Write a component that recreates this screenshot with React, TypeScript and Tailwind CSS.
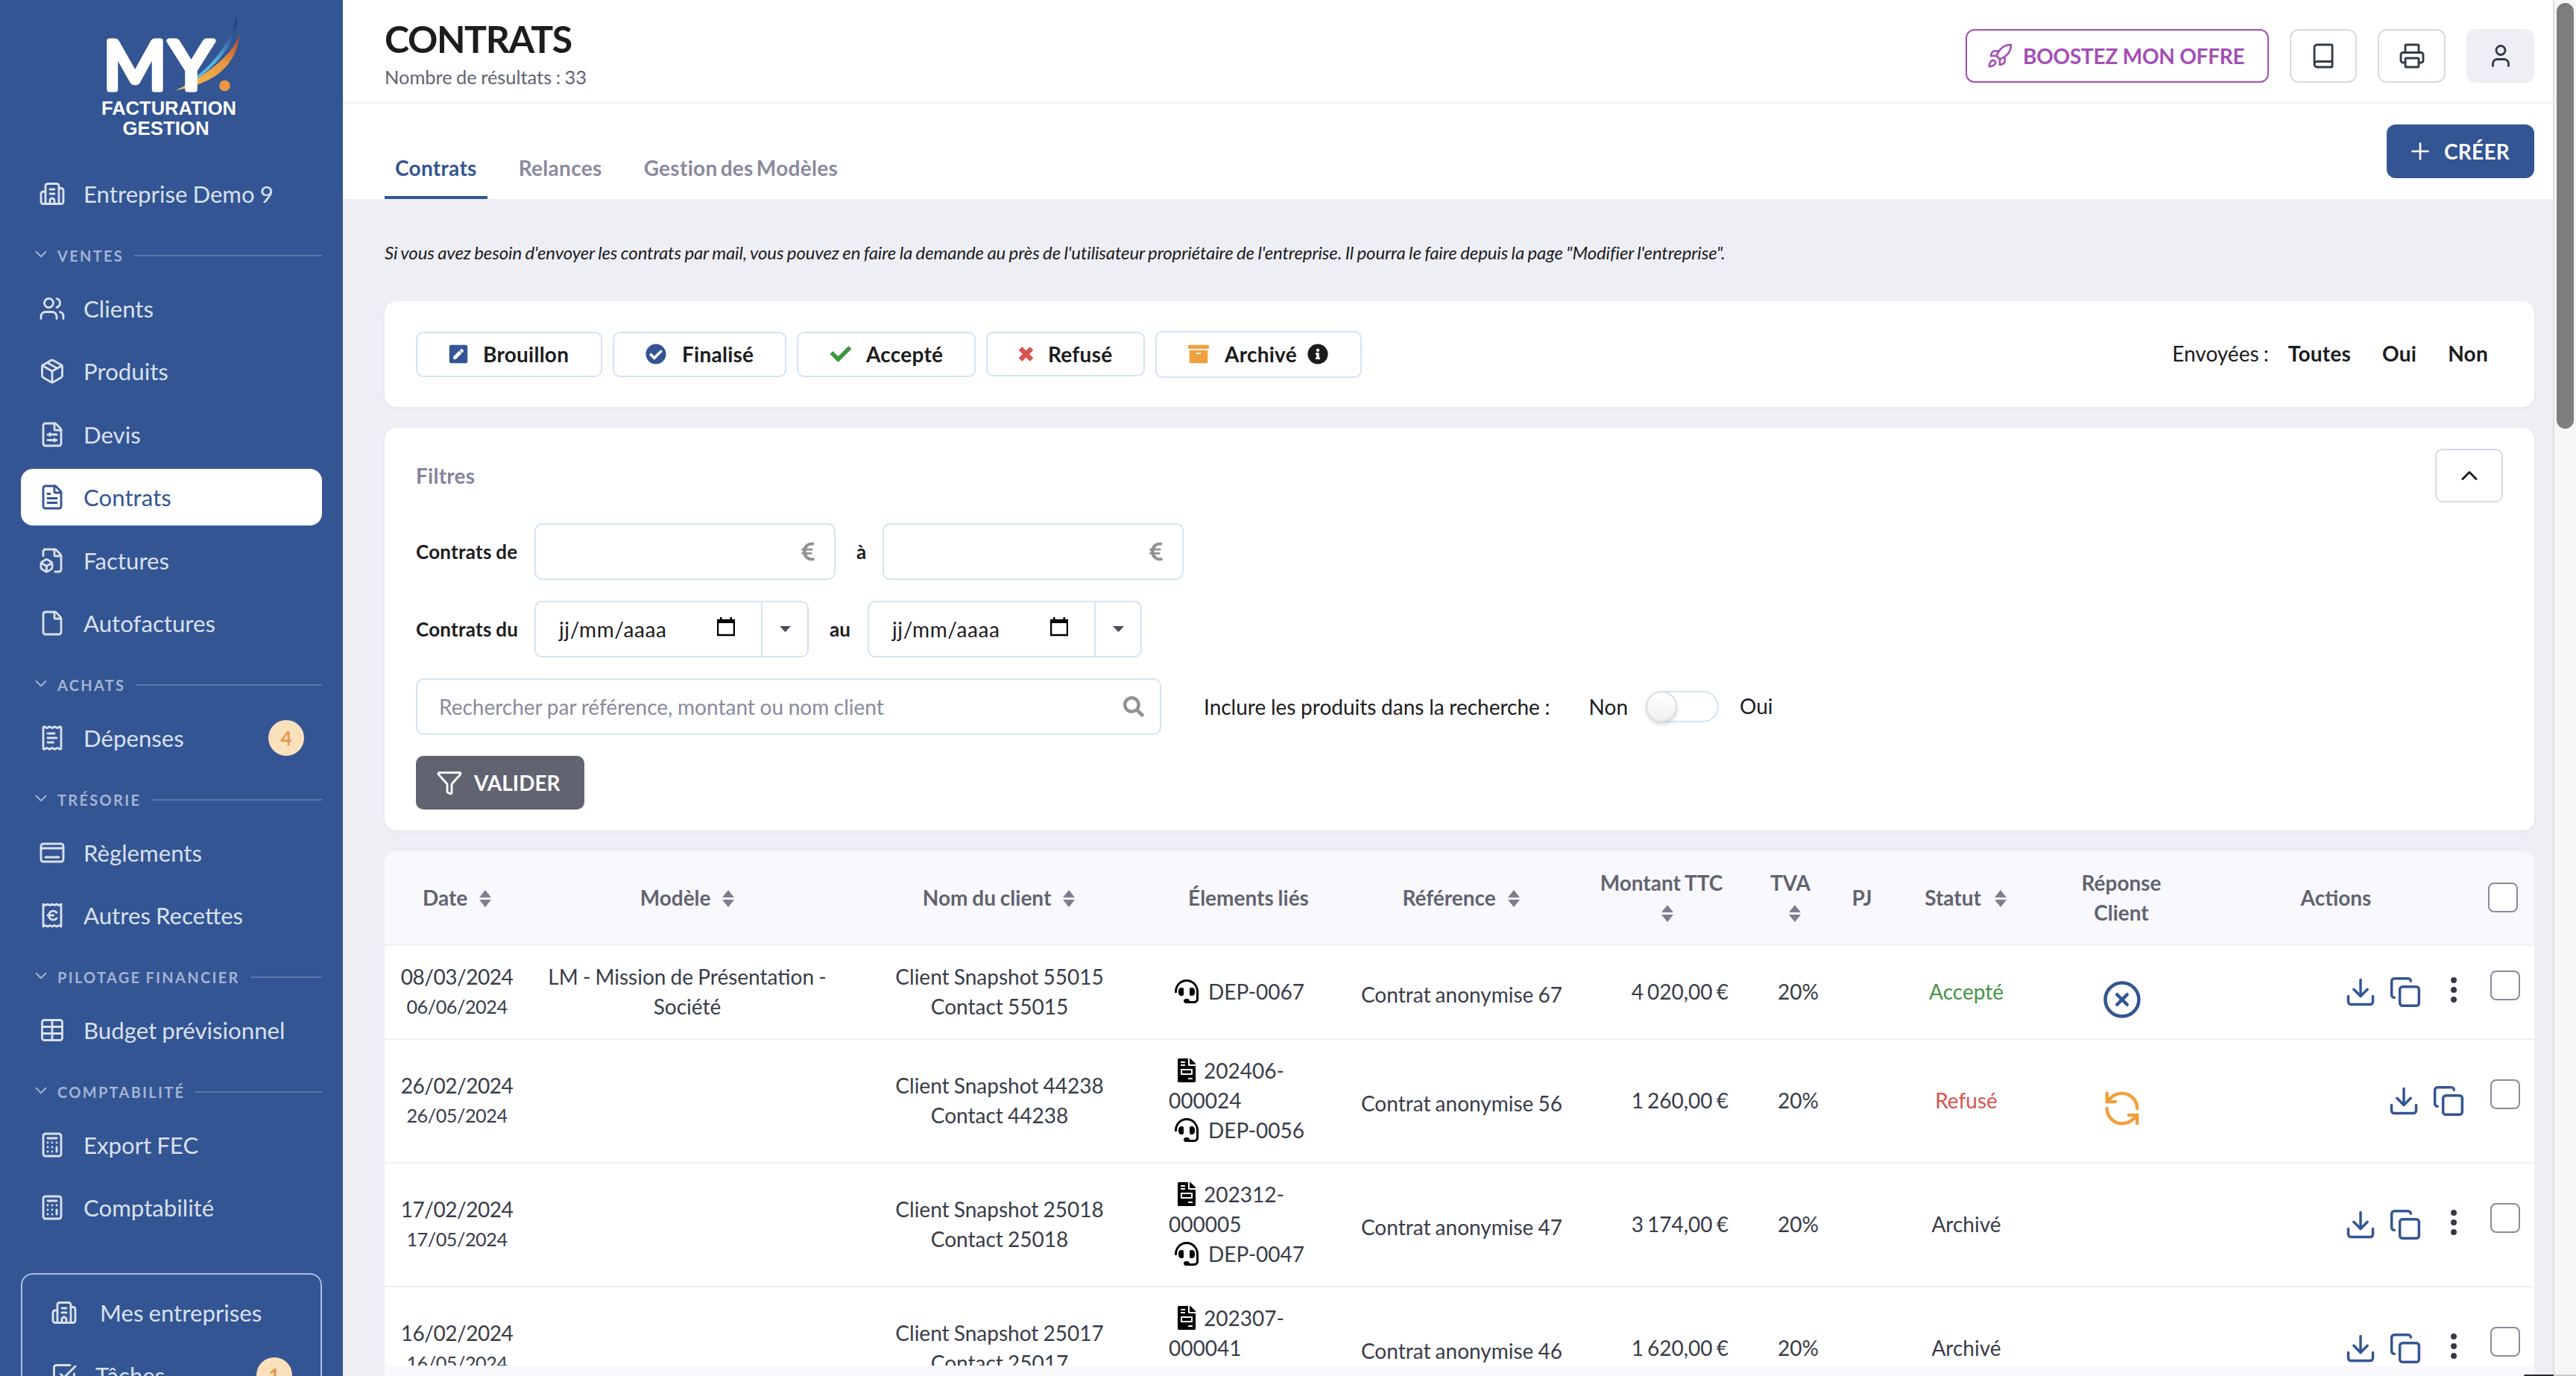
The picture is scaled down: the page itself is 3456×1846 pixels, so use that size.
import clsx from "clsx";
import {
  Book,
  Building2,
  Calculator,
  ChevronDown,
  ChevronUp,
  CircleX,
  Copy,
  Dock,
  Download,
  File,
  FileBox,
  FileSliders,
  FileText,
  Funnel,
  Package,
  Plus,
  Printer,
  ReceiptEuro,
  ReceiptText,
  RefreshCcw,
  Rocket,
  SquareCheckBig,
  Table,
  User,
  Users
} from "lucide-react";
import { ComponentType, ReactNode } from "react";
import {
  FaArchive,
  FaCheck,
  FaCheckCircle,
  FaEuroSign,
  FaFileInvoice,
  FaHeadset,
  FaInfoCircle,
  FaPenSquare,
  FaSearch
} from "react-icons/fa";

type IconProps = { className?: string; strokeWidth?: number | string };
type IconType = ComponentType<IconProps>;

type NavItem = {
  label: string;
  icon: IconType;
  badge?: string;
  active?: boolean;
};

type NavSection = {
  title: string;
  items: NavItem[];
};

type Contract = {
  date: string;
  dueDate: string;
  model?: string;
  client: string;
  contact: string;
  invoice?: string;
  quote: string;
  reference: string;
  amount: string;
  status: string;
  statusClass?: string;
  answer?: "closed" | "retry";
  hasMenu: boolean;
};

const sections: NavSection[] = [
  {
    title: "VENTES",
    items: [
      { label: "Clients", icon: Users },
      { label: "Produits", icon: Package },
      { label: "Devis", icon: FileSliders },
      { label: "Contrats", icon: FileText, active: true },
      { label: "Factures", icon: FileBox },
      { label: "Autofactures", icon: File }
    ]
  },
  { title: "ACHATS", items: [{ label: "Dépenses", icon: ReceiptText, badge: "4" }] },
  {
    title: "TRÉSORIE",
    items: [
      { label: "Règlements", icon: Dock },
      { label: "Autres Recettes", icon: ReceiptEuro }
    ]
  },
  { title: "PILOTAGE FINANCIER", items: [{ label: "Budget prévisionnel", icon: Table }] },
  {
    title: "COMPTABILITÉ",
    items: [
      { label: "Export FEC", icon: Calculator },
      { label: "Comptabilité", icon: Calculator }
    ]
  }
];

const contracts: Contract[] = [
  {
    date: "08/03/2024",
    dueDate: "06/06/2024",
    model: "LM - Mission de Présentation - Société",
    client: "Client Snapshot 55015",
    contact: "Contact 55015",
    quote: "DEP-0067",
    reference: "Contrat anonymise 67",
    amount: "4 020,00 €",
    status: "Accepté",
    statusClass: "text-[#419641]",
    answer: "closed",
    hasMenu: true
  },
  {
    date: "26/02/2024",
    dueDate: "26/05/2024",
    client: "Client Snapshot 44238",
    contact: "Contact 44238",
    invoice: "202406-000024",
    quote: "DEP-0056",
    reference: "Contrat anonymise 56",
    amount: "1 260,00 €",
    status: "Refusé",
    statusClass: "text-[#d9534f]",
    answer: "retry",
    hasMenu: false
  },
  {
    date: "17/02/2024",
    dueDate: "17/05/2024",
    client: "Client Snapshot 25018",
    contact: "Contact 25018",
    invoice: "202312-000005",
    quote: "DEP-0047",
    reference: "Contrat anonymise 47",
    amount: "3 174,00 €",
    status: "Archivé",
    hasMenu: true
  },
  {
    date: "16/02/2024",
    dueDate: "16/05/2024",
    client: "Client Snapshot 25017",
    contact: "Contact 25017",
    invoice: "202307-000041",
    quote: "DEP-0046",
    reference: "Contrat anonymise 46",
    amount: "1 620,00 €",
    status: "Archivé",
    hasMenu: true
  }
];

const columnWidths = [
  "w-[194px]",
  "w-[424px]",
  "w-[412px]",
  "w-[258px]",
  "w-[314px]",
  "w-[224px]",
  "w-[120px]",
  "w-[72px]",
  "w-[208px]",
  "w-[208px]",
  "w-[368px]",
  "w-[82px]"
];

export default function App() {
  return (
    <div className="relative flex h-[1846px] w-[3456px] overflow-hidden bg-[#eeeff5] font-['Lato',sans-serif] text-[28px] leading-[40px] text-[#1c1c1e] [word-spacing:-1px]">
      <Sidebar />
      <div className="flex h-full w-[2965px] flex-col">
        <Header />
        <main className="flex min-h-0 flex-1 flex-col pl-14 pr-[25px]">
          <p className="mt-[52px] h-10 whitespace-nowrap text-[24px] italic tracking-[-0.13px]">
            Si vous avez besoin d'envoyer les contrats par mail, vous pouvez en faire la demande au près de l'utilisateur
            propriétaire de l'entreprise. Il pourra le faire depuis la page "Modifier l'entreprise".
          </p>
          <StatusBar />
          <Filters />
          <ContractTable />
          <div className="h-[14px] shrink-0 bg-[#f9f9fd]" />
        </main>
      </div>
      <div className="ml-auto h-full w-[31px] border-l-2 border-[#dedee2] bg-[#f6f6f8] pl-[3px] pt-1">
        <div className="h-[571px] w-[23px] rounded-full bg-[#7d7d7d]" />
      </div>
      {/* Top edge of the docked help widget */}
      <div className="absolute bottom-0 right-0 flex h-0.5 w-[70px]">
        <div className="w-10 rounded-tl-full bg-[#2b2b2f]" />
        <div className="flex-1 bg-[#c9c9cc]" />
      </div>
    </div>
  );
}

function Sidebar() {
  return (
    <aside className="flex h-full w-[460px] shrink-0 flex-col overflow-hidden bg-[#335593] px-7 text-[#d9e0ee]">
      <Logo />
      <NavRow icon={Building2} label="Entreprise Demo 9" />
      {sections.map((section) => (
        <div className="shrink-0" key={section.title}>
          <div className="flex h-[69.2px] items-center pl-[14px] pt-[12px] text-[20px] font-bold tracking-[2.3px] text-[#a3b3d2]">
            <ChevronDown className="mb-1 size-[26px] shrink-0" strokeWidth={1.75} />
            <span className="ml-[9px] whitespace-nowrap">{section.title}</span>
            <span className="ml-[14px] h-0.5 flex-1 bg-[#5a76a8]" />
          </div>
          {section.items.map((item) => (
            <NavRow key={item.label} {...item} />
          ))}
        </div>
      ))}
      <div className="mt-[46px] h-[300px] shrink-0 rounded-[16px] border-2 border-[#a9bfe6] pl-[10px] pr-[10px] pt-[8px]">
        <NavRow icon={Building2} label="Mes entreprises" labelClass="ml-[30px]" nested />
        <NavRow badge="1" icon={SquareCheckBig} label="Tâches" nested />
      </div>
    </aside>
  );
}

function NavRow({
  label,
  icon: Icon,
  badge,
  active,
  nested,
  labelClass = "ml-6"
}: NavItem & { nested?: boolean; labelClass?: string }) {
  return (
    <div className="flex h-[84.5px] shrink-0 items-center">
      <div
        className={clsx(
          "flex h-[76px] w-full items-center rounded-[16px]",
          nested ? "pl-[28px] pr-[28px]" : "pl-6 pr-6",
          active && "bg-white text-[#335593]"
        )}
      >
        <Icon className="size-9 shrink-0" strokeWidth={1.9} />
        <span className={clsx("text-[31.2px]", labelClass)}>{label}</span>
        {badge ? (
          <span className="ml-auto flex size-12 items-center justify-center rounded-full bg-[#fae0bb] text-[26px] font-bold text-[#e1984b]">
            {badge}
          </span>
        ) : null}
      </div>
    </div>
  );
}

function Logo() {
  return (
    <div className="h-[218px] shrink-0">
      <svg className="ml-[92px] h-[200px] w-[220px]" viewBox="120 0 220 200">
        <defs>
          <linearGradient id="swoosh-blue" x1="0" x2="1" y1="1" y2="0">
            <stop offset="0" stopColor="#5cc4ee" />
            <stop offset="0.5" stopColor="#56b8e6" />
            <stop offset="1" stopColor="#1d2a6b" />
          </linearGradient>
          <linearGradient id="swoosh-orange" x1="0" x2="1" y1="1" y2="0">
            <stop offset="0" stopColor="#f6c445" />
            <stop offset="0.6" stopColor="#e89a45" />
            <stop offset="1" stopColor="#b4411f" />
          </linearGradient>
        </defs>
        <path d="M318 22C319 48 305 76 262 108C252 115 243 119 235 121C250 116 257 108 264 102C292 80 309 54 318 22Z" fill="url(#swoosh-blue)" />
        <path d="M321.5 44C317 62 303 80 264 106C254 112 245 118 235 121C272 115 318 98 321.5 44Z" fill="url(#swoosh-orange)" />
        <circle cx="301.5" cy="115" fill="#ea9840" r="7.3" />
        <g
          fill="white"
          fontFamily="Lato, sans-serif"
          fontSize="91"
          fontWeight="400"
          stroke="white"
          strokeLinejoin="round"
          strokeWidth="7"
        >
          <text lengthAdjust="spacingAndGlyphs" textLength="85" x="138.5" y="120">
            M
          </text>
          <text lengthAdjust="spacingAndGlyphs" textLength="59" x="227" y="120">
            Y
          </text>
        </g>
        <g fill="white" fontFamily="'Liberation Sans', Arial, sans-serif" fontSize="26" fontWeight="700">
          <text lengthAdjust="spacingAndGlyphs" textLength="181" x="136" y="153.5">
            FACTURATION
          </text>
          <text lengthAdjust="spacingAndGlyphs" textLength="116" x="164.5" y="180.5">
            GESTION
          </text>
        </g>
      </svg>
    </div>
  );
}

function Header() {
  return (
    <header className="shrink-0 bg-white">
      <div className="flex h-[139px] justify-between border-b-2 border-[#eeeff5] pl-14 pr-[25px]">
        <div className="pt-[22px]">
          <h1 className="text-[50px] font-bold leading-[60px] tracking-[-1.4px]">CONTRATS</h1>
          <p className="mt-px text-[25.4px] text-[#626371]">Nombre de résultats : 33</p>
        </div>
        <div className="mt-[39px] flex h-[72px] gap-[28px]">
          <button className="flex w-[407px] items-center rounded-[12px] border-2 border-[#a34fb5] pl-[26px] font-bold text-[#a34fb5]">
            <Rocket className="size-9" strokeWidth={1.75} />
            <span className="ml-[13px] tracking-[-0.25px]">BOOSTEZ MON OFFRE</span>
          </button>
          <button className="flex w-[90px] items-center justify-center rounded-[12px] border-2 border-[#d9d8e5] text-[#353a48]">
            <Book className="size-9" strokeWidth={1.9} />
          </button>
          <button className="flex w-[91px] items-center justify-center rounded-[12px] border-2 border-[#d9d8e5] text-[#353a48]">
            <Printer className="size-9" strokeWidth={1.9} />
          </button>
          <button className="flex w-[91px] items-center justify-center rounded-[12px] bg-[#eeeff5] text-[#353a48]">
            <User className="size-9" strokeWidth={1.9} />
          </button>
        </div>
      </div>
      <div className="flex h-32 justify-between pl-14 pr-[25px]">
        <nav className="flex gap-[28px] pt-11 font-bold tracking-[0.3px] text-[#8a8a9e] [word-spacing:-3px]">
          <a className="h-[84px] border-b-4 border-[#335593] px-[14px] pt-[22px] text-[#335593]">Contrats</a>
          <a className="h-[84px] px-[14px] pt-[22px]">Relances</a>
          <a className="h-[84px] px-[14px] pt-[22px]">Gestion des Modèles</a>
        </nav>
        <button className="mt-7 flex h-[72px] w-[198px] items-center rounded-[12px] bg-[#335593] pl-[27px] font-bold text-white">
          <Plus className="size-9" strokeWidth={1.75} />
          <span className="ml-[14px] tracking-[0.25px]">CRÉER</span>
        </button>
      </div>
    </header>
  );
}

function StatusButton({ className, icon, children }: { className: string; icon: ReactNode; children: ReactNode }) {
  return (
    <button
      className={clsx(
        "flex items-center rounded-[10px] border-2 border-[#d3e2f6] pl-[41px] font-bold tracking-[0.25px]",
        className
      )}
    >
      {icon}
      {children}
    </button>
  );
}

function StatusBar() {
  return (
    <section className="mt-[45px] flex h-[142px] shrink-0 items-center rounded-[16px] bg-white pl-[42px] pr-[62px] shadow-[0_2px_6px_rgba(40,50,90,0.04)]">
      <div className="flex items-center gap-[14px]">
        <StatusButton className="h-[61px] w-[250px]" icon={<FaPenSquare className="mr-[19px] size-[28px] text-[#335593]" />}>
          Brouillon
        </StatusButton>
        <StatusButton className="h-[61px] w-[233px]" icon={<FaCheckCircle className="ml-px mr-[21px] size-[28px] text-[#335593]" />}>
          Finalisé
        </StatusButton>
        <StatusButton className="h-[61px] w-[240px]" icon={<FaCheck className="ml-0.5 mr-[20px] size-[28px] text-[#419641]" />}>
          Accepté
        </StatusButton>
        <StatusButton
          className="h-[60px] w-[213px]"
          icon={
            <svg className="mr-[19px] h-5 w-[21px] text-[#d9534f]" viewBox="0 0 21 20">
              <path d="m3 2.500 15 15M18 2.500l-15 15" fill="none" stroke="currentColor" strokeWidth="6.500" />
            </svg>
          }
        >
          Refusé
        </StatusButton>
        <StatusButton className="h-[63px] w-[277px]" icon={<FaArchive className="ml-px mr-[21px] size-[28px] text-[#f0a03c]" />}>
          Archivé
          <FaInfoCircle className="ml-[14px] size-[28px]" />
        </StatusButton>
      </div>
      <div className="ml-auto flex items-center pb-0.5">
        <span>Envoyées :</span>
        <div className="ml-[26px] flex gap-[42px] font-bold tracking-[0.25px]">
          <span>Toutes</span>
          <span>Oui</span>
          <span>Non</span>
        </div>
      </div>
    </section>
  );
}

function AmountInput() {
  return (
    <div className="flex h-[76px] w-[404px] items-center justify-end rounded-[10px] border-2 border-[#d5e3f2] pr-[21px] text-[#919191]">
      <FaEuroSign className="size-7" />
    </div>
  );
}

function DateInput() {
  return (
    <div className="flex h-[76px] w-[368px] rounded-[10px] border-2 border-[#d5e3f2]">
      <div className="flex w-[304px] items-center border-r-2 border-[#d5e3f2] pl-[31px]">
        <span className="w-[212px] tracking-[0.6px]">jj/mm/aaaa</span>
        <svg className="-mt-[7px] h-[26px] w-6 text-black" viewBox="0 0 24 26">
          <path d="M1 4h22v20H1Z" fill="none" stroke="currentColor" strokeWidth="2.500" />
          <path d="M0 3h24v5H0ZM4 0h2.500v4H4ZM17.500 0H20v4h-2.500Z" fill="currentColor" />
        </svg>
      </div>
      <div className="flex flex-1 items-center justify-center">
        <svg className="h-2 w-[15px] text-[#4b4d5c]" viewBox="0 0 15 8">
          <path d="M0 0h15L7.500 8Z" fill="currentColor" />
        </svg>
      </div>
    </div>
  );
}

function Filters() {
  return (
    <section className="mt-7 h-[540px] shrink-0 rounded-[16px] bg-white pl-[42px] pr-[42px] pt-7 shadow-[0_2px_6px_rgba(40,50,90,0.04)]">
      <div className="flex h-[72px] items-center justify-between">
        <h2 className="font-bold tracking-[0.25px] text-[#85859a]">Filtres</h2>
        <button className="flex h-[72px] w-[91px] items-center justify-center rounded-[10px] border-2 border-[#d9d8e5]">
          <ChevronUp className="size-9" strokeWidth={1.9} />
        </button>
      </div>
      <div className="mt-7 flex items-center">
        <span className="w-[159px] text-[26px] font-bold tracking-[0.25px]">Contrats de</span>
        <AmountInput />
        <span className="w-[63px] pl-7 text-[26px] font-bold">à</span>
        <AmountInput />
      </div>
      <div className="mt-7 flex items-center">
        <span className="w-[159px] text-[26px] font-bold tracking-[0.25px]">Contrats du</span>
        <DateInput />
        <span className="w-[79px] pl-[28px] text-[26px] font-bold">au</span>
        <DateInput />
      </div>
      <div className="mt-7 flex items-center">
        <div className="flex h-[76px] w-[1000px] items-center justify-between rounded-[10px] border-2 border-[#d5e3f2] pl-[29px] pr-[21px]">
          <span className="text-[#8a8a9e] [word-spacing:-0.5px]">Rechercher par référence, montant ou nom client</span>
          <FaSearch className="size-7 text-[#919191]" />
        </div>
        <span className="ml-[57px] [word-spacing:-0.5px]">Inclure les produits dans la recherche :</span>
        <span className="ml-[52px]">Non</span>
        <div className="ml-[24px] h-[42px] w-[98px] rounded-full border-2 border-[#d5e3f2]">
          <div className="-ml-0.5 -mt-0.5 size-[42px] rounded-full border-2 border-[#dcdcdc] bg-gradient-to-b from-white to-[#f0f0f0] shadow-[0_3px_5px_rgba(0,0,0,0.15)]" />
        </div>
        <span className="ml-[28px] pb-0.5">Oui</span>
      </div>
      <button className="mt-7 flex h-[72px] w-[226px] items-center rounded-[10px] bg-[#626371] pl-[27px] font-bold text-white">
        <Funnel className="size-9" strokeWidth={1.9} />
        <span className="ml-[15px]">VALIDER</span>
      </button>
    </section>
  );
}

function SortIcon({ className }: { className?: string }) {
  return (
    <svg className={clsx("inline-block h-[23px] w-4 -translate-y-0.5 text-[#7e7e8f]", className)} viewBox="0 0 16 23">
      <path d="M8 0 16 10H0ZM0 13h16L8 23Z" fill="currentColor" />
    </svg>
  );
}

function Checkbox() {
  return <div className="size-[40px] rounded-[8px] border-2 border-[#8a8a9e] bg-white" />;
}

function ContractTable() {
  return (
    <section className="mt-7 min-h-0 flex-1 overflow-hidden rounded-t-[16px] bg-white text-[#383c48]">
      <table className="w-[2884px] table-fixed border-collapse text-center">
        <colgroup>
          {columnWidths.map((width, index) => (
            <col className={width} key={index} />
          ))}
        </colgroup>
        <thead>
          <tr className="h-[126px] border-b-2 border-[#eeeff5] bg-[#f9f9fd] text-[#626371] [&>th]:pb-px">
            <th>
              Date <SortIcon className="ml-2.5" />
            </th>
            <th>
              Modèle <SortIcon className="ml-2.5" />
            </th>
            <th>
              Nom du client <SortIcon className="ml-2.5" />
            </th>
            <th>Élements liés</th>
            <th className="pr-0.5">
              Référence <SortIcon className="ml-2.5" />
            </th>
            <th className="pr-0.5">
              Montant TTC
              <br />
              <SortIcon className="ml-4" />
            </th>
            <th>
              TVA
              <br />
              <SortIcon className="ml-3" />
            </th>
            <th>PJ</th>
            <th className="pr-0.5">
              Statut <SortIcon className="ml-3" />
            </th>
            <th>
              Réponse
              <br />
              Client
            </th>
            <th>Actions</th>
            <th className="pl-5">
              <Checkbox />
            </th>
          </tr>
        </thead>
        <tbody>
          {contracts.map((contract) => (
            <ContractRow contract={contract} key={contract.reference} />
          ))}
        </tbody>
      </table>
    </section>
  );
}

function ContractRow({ contract }: { contract: Contract }) {
  return (
    <tr className={clsx("border-b-2 border-[#eeeff5]", contract.invoice ? "h-[166px]" : "h-[126px]")}>
      <td className="pb-0.5 tracking-[-0.45px]">
        <div>{contract.date}</div>
        <div className="text-[25.2px]">{contract.dueDate}</div>
      </td>
      <td className="px-[20px] pb-0.5">{contract.model}</td>
      <td className="pb-0.5 pl-0.5">
        {contract.client}
        <br />
        {contract.contact}
      </td>
      <td className="px-[22px] pb-0.5 text-left">
        {contract.invoice ? (
          <div>
            <FaFileInvoice className="ml-2 mr-[7px] inline size-8 -translate-y-1 text-black" />
            {contract.invoice}
          </div>
        ) : null}
        <div>
          <FaHeadset className="ml-2 mr-[13px] inline size-8 -translate-y-1 text-black" />
          {contract.quote}
        </div>
      </td>
      <td className="pt-1.5">{contract.reference}</td>
      <td className="pb-0.5 pr-[23px] text-right [word-spacing:-2px]">{contract.amount}</td>
      <td className="pb-0.5 pr-[22px] text-right">20%</td>
      <td />
      <td className={clsx("pb-0.5", contract.statusClass)}>{contract.status}</td>
      <td className="pl-0.5 pt-[20px]">
        {contract.answer === "closed" ? (
          <CircleX className="mx-auto size-[54px] text-[#335593]" strokeWidth={2} />
        ) : null}
        {contract.answer === "retry" ? (
          <RefreshCcw className="mx-auto size-[54px] text-[#f0a03c]" strokeWidth={2} />
        ) : null}
      </td>
      <td className="pr-[11px]">
        <div className="flex items-center justify-end text-[#335593]">
          <Download className="mr-4 size-[44px]" strokeWidth={1.9} />
          <Copy className="size-[44px]" strokeWidth={1.9} />
          {contract.hasMenu ? (
            <div className="ml-[39px] mr-[11px] flex flex-col gap-[5px] pb-1.5">
              <span className="size-2 rounded-full bg-[#353a48]" />
              <span className="size-2 rounded-full bg-[#353a48]" />
              <span className="size-2 rounded-full bg-[#353a48]" />
            </div>
          ) : null}
        </div>
      </td>
      <td className="pb-[18px] pl-[23px]">
        <Checkbox />
      </td>
    </tr>
  );
}
